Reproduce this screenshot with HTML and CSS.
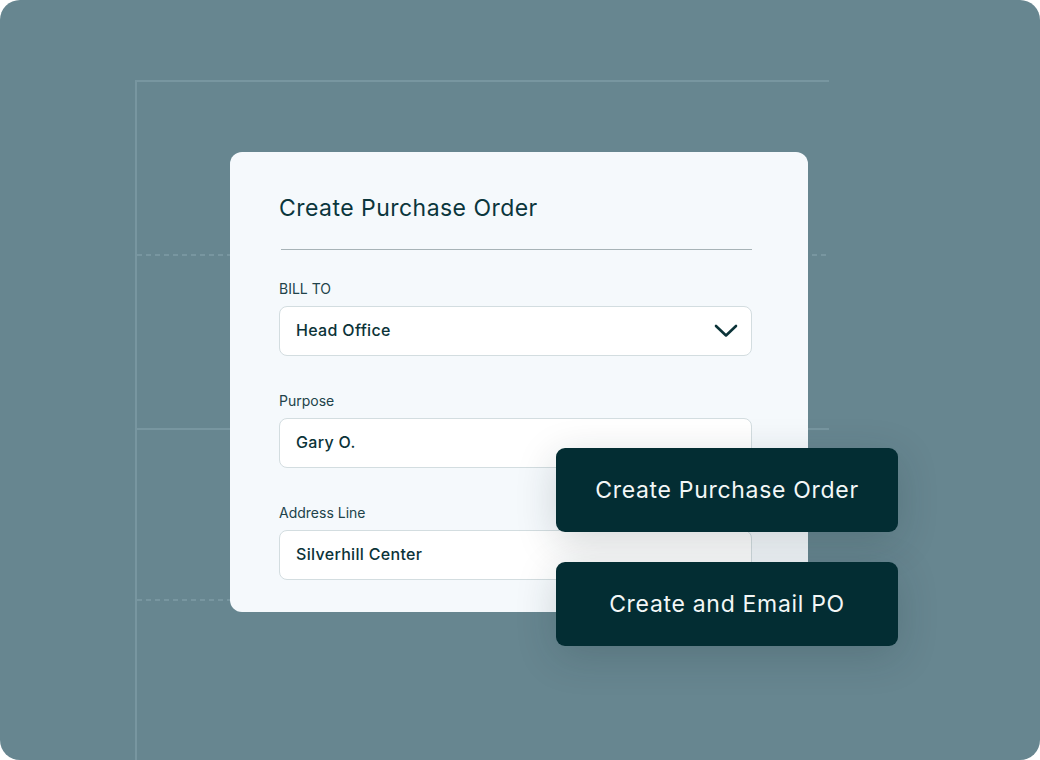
FILE: index.html
```html
<!DOCTYPE html>
<html lang="en">
<head>
  <meta charset="UTF-8" />
  <title>Create Purchase Order</title>
  <link rel="stylesheet" href="styles.css">
</head>
<body>

  <div class="frame">
    <div class="guides">
      <div class="guide dashed g1"></div>
      <div class="guide g2"></div>
      <div class="guide dashed g3"></div>
    </div>

    <div class="card">
      <div class="card-title">Create Purchase Order</div>
      <div class="divider"></div>

      <div class="field">
        <label class="field-label upper">BILL TO</label>
        <div class="field-box select">
          <span>Head Office</span>
          <svg class="chevron" width="24" height="14" viewBox="0 0 24 14">
            <path d="M2 2 L12 11.5 L22 2" fill="none" stroke="#0b3338" stroke-width="2.6" stroke-linecap="round" stroke-linejoin="round"/>
          </svg>
        </div>
      </div>

      <div class="field">
        <label class="field-label">Purpose</label>
        <div class="field-box"><span>Gary O.</span></div>
      </div>

      <div class="field">
        <label class="field-label">Address Line</label>
        <div class="field-box"><span>Silverhill Center</span></div>
      </div>
    </div>

    <div class="actions">
      <button class="action-btn">Create Purchase Order</button>
      <button class="action-btn">Create and Email PO</button>
    </div>
  </div>

</body>
</html>
```

FILE: styles.css
```css
* { box-sizing: border-box; }
body {
  margin: 0;
  background: #ffffff;
  font-family: Inter, 'Noto Sans', sans-serif;
  font-optical-sizing: none;
}

.frame {
  position: relative;
  width: 1040px;
  height: 760px;
  border-radius: 20px;
  background-color: #678690;
  overflow: hidden;
  padding: 152px 0 0 230px;
}

/* background guide lines */
.guides {
  position: absolute;
  left: 135px;
  top: 80px;
  width: 694px;
  bottom: 0;
  border-left: 2px solid #7896a0;
  border-top: 2px solid #7896a0;
}

.guide {
  position: absolute;
  left: 0;
  right: 0;
  height: 2px;
  background: #7896a0;
}

.guide.dashed {
  background: repeating-linear-gradient(90deg, #7896a0 0 5px, transparent 5px 9px);
}

.g1 { top: 172px; }
.g2 { top: 346px; }
.g3 { top: 517px; }

.card {
  position: relative;
  width: 578px;
  height: 460px;
  background-color: #f5f9fc;
  border-radius: 12px;
  padding: 42px 56px 0 49px;
}

.card-title {
  font-size: 23px;
  line-height: 28px;
  color: #0b363c;
  letter-spacing: 0.02em;
}

.divider {
  height: 1px;
  background-color: #a7b3b7;
  margin: 27px 0 30px 2px;
}

.field {
  display: flex;
  flex-direction: column;
  gap: 8px;
  margin-bottom: 36px;
}

.field-label {
  font-size: 14px;
  line-height: 18px;
  color: #21434a;
}

.field-box {
  height: 50px;
  background: #ffffff;
  border: 1px solid #d3dde0;
  border-radius: 8px;
  padding: 0 16px 2px;
  display: flex;
  align-items: center;
  justify-content: space-between;
  font-size: 16px;
  font-weight: 450;
  letter-spacing: 0.02em;
  color: #0b3338;
}

.chevron {
  margin-right: -3px;
  margin-top: 2px;
}

.actions {
  position: absolute;
  left: 556px;
  top: 448px;
  display: flex;
  flex-direction: column;
  gap: 30px;
}

.action-btn {
  width: 342px;
  height: 84px;
  border: none;
  border-radius: 9px;
  background-color: #032d33;
  color: #f3f7f7;
  font-family: Inter, 'Noto Sans', sans-serif;
  font-optical-sizing: none;
  font-size: 23px;
  letter-spacing: 0.03em;
  box-shadow: 0 10px 40px rgba(20, 40, 45, 0.18);
}
```
